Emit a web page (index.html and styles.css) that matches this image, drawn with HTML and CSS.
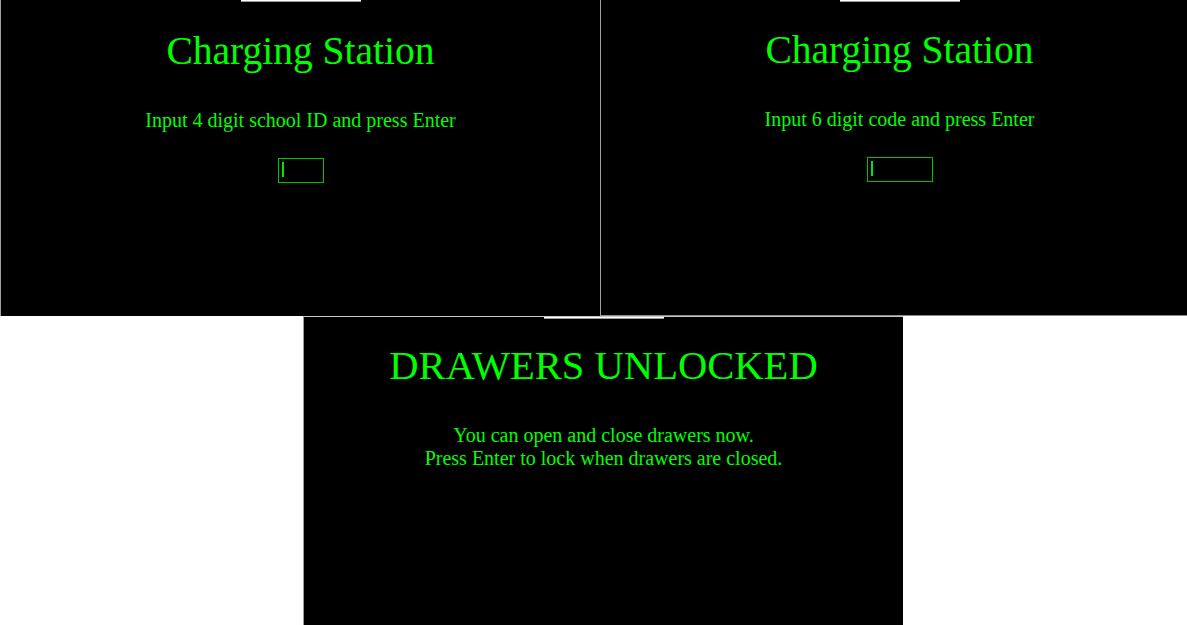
FILE: index.html
```html
<!DOCTYPE html>
<html lang="en">
<head>
<meta charset="utf-8">
<title>Charging Station</title>
<link rel="stylesheet" href="styles.css">
</head>
<body>
  <div class="top-row">
    <section class="panel">
      <div class="tab"></div>
      <h1 class="title">Charging Station</h1>
      <p class="prompt">Input 4 digit school ID and press Enter</p>
      <div class="field"><span class="cursor"></span></div>
    </section>
    <section class="panel panel-code">
      <div class="tab"></div>
      <h1 class="title">Charging Station</h1>
      <p class="prompt">Input 6 digit code and press Enter</p>
      <div class="field field-wide"><span class="cursor"></span></div>
    </section>
  </div>
  <section class="unlock-panel">
    <div class="tab"></div>
    <h1 class="title title-unlock">DRAWERS UNLOCKED</h1>
    <p class="message">You can open and close drawers now.<br>Press Enter to lock when drawers are closed.</p>
  </section>
</body>
</html>
```

FILE: styles.css
```css
html, body {
  margin: 0;
  padding: 0;
}

body {
  background: #ffffff;
  font-family: "Liberation Serif", "Times New Roman", serif;
  overflow: hidden;
  width: 1187px;
  height: 625px;
}

.top-row {
  display: flex;
  width: 1187px;
  overflow: hidden;
}

.panel {
  flex: 0 0 600px;
  box-sizing: border-box;
  height: 316px;
  background: #000000;
  border-left: 1px solid #a0a0a0;
  display: flex;
  flex-direction: column;
  align-items: center;
  color: #00ff00;
}

.panel-code {
  flex-basis: 598px;
  height: 316px;
  border-bottom: 1px solid #8c8c8c;
}

.panel-code .title {
  margin-top: 24.5px;
}

.tab {
  width: 120px;
  height: 1px;
  background: #ffffff;
  border-bottom: 1px solid #9a9a9a;
  flex: none;
}

.title {
  margin: 25.5px 0 0;
  font-size: 39.5px;
  line-height: 46px;
  font-weight: normal;
  white-space: nowrap;
}

.prompt {
  margin: 35px 0 0;
  font-size: 20px;
  line-height: 23px;
  white-space: nowrap;
}

.field {
  margin-top: 26px;
  width: 46px;
  height: 25px;
  box-sizing: border-box;
  border: 1px solid #00c400;
  padding: 3px;
  display: flex;
}

.field-wide {
  width: 66px;
}

.cursor {
  display: block;
  width: 2px;
  height: 15px;
  background: #00e600;
}

.unlock-panel {
  margin-left: 303px;
  width: 600px;
  height: 309px;
  box-sizing: border-box;
  border-left: 1px solid #9a9a9a;
  border-top: 1px solid #c8c8c8;
  background: #000000;
  color: #00ff00;
  display: flex;
  flex-direction: column;
  align-items: center;
}

.title-unlock {
  margin-top: 24px;
  font-size: 40.6px;
}

.message {
  margin: 35px 0 0;
  font-size: 20px;
  line-height: 23px;
  text-align: center;
  white-space: nowrap;
}
```
